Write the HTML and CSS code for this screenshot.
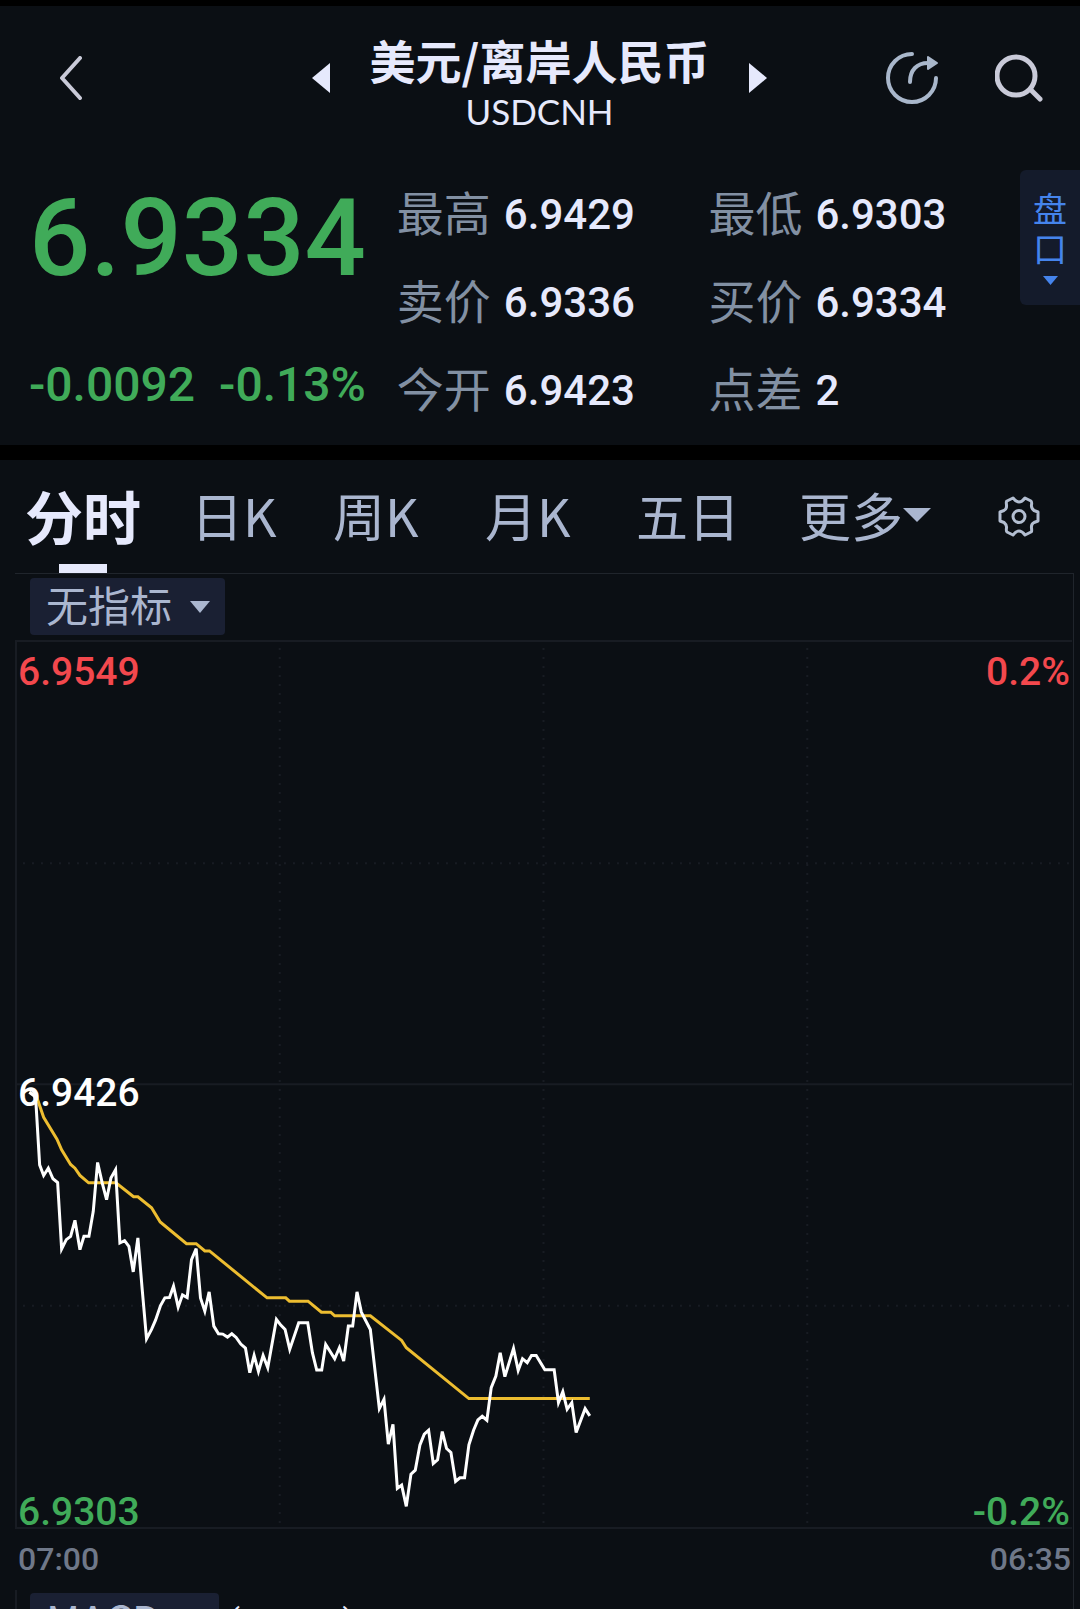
FILE: index.html
```html
<!DOCTYPE html>
<html lang="zh-CN">
<head>
<meta charset="utf-8">
<meta name="viewport" content="width=device-width, initial-scale=1">
<title>美元/离岸人民币 USDCNH</title>
<link rel="stylesheet" href="styles.css">
</head>
<body>
<div class="app">
  <header class="topbar">
    <button class="icon-btn" type="button" aria-label="返回">
      <svg width="22" height="44" viewBox="0 0 22 44"><path d="M20 2 2 22l18 20" fill="none" stroke="#c9cad8" stroke-width="4" stroke-linecap="round" stroke-linejoin="round"/></svg>
    </button>
    <div class="symbol">
      <button class="icon-btn" type="button" aria-label="上一个">
        <svg width="18" height="30" viewBox="0 0 18 30"><path d="M18 0v30L0 15z" fill="#e6e9fc"/></svg>
      </button>
      <div class="names">
        <h1 class="name">美元/离岸人民币</h1>
        <p class="code">USDCNH</p>
      </div>
      <button class="icon-btn" type="button" aria-label="下一个">
        <svg width="18" height="30" viewBox="0 0 18 30"><path d="M0 0v30l18-15z" fill="#e6e9fc"/></svg>
      </button>
    </div>
    <div class="actions">
      <button class="icon-btn" type="button" aria-label="分享">
        <svg width="54" height="54" viewBox="0 0 54 54"><g fill="none" stroke="#a9b7cb" stroke-width="4" stroke-linecap="round"><path d="M27 3A24 24 0 1 0 51 27"/><path d="M25 31c0-12 7-19 18-19"/></g><path d="M43 6 52 12 43 18z" fill="#a9b7cb" stroke="#a9b7cb" stroke-width="2" stroke-linejoin="round"/></svg>
      </button>
      <button class="icon-btn" type="button" aria-label="搜索">
        <svg width="48" height="48" viewBox="0 0 48 48"><g fill="none" stroke="#c9cad8" stroke-width="5" stroke-linecap="round"><circle cx="21" cy="22" r="19"/><path d="m36 36 9 9"/></g></svg>
      </button>
    </div>
  </header>

  <section class="quote">
    <div class="price">
      <strong class="last">6.9334</strong>
      <p class="change"><span>-0.0092</span><span>-0.13%</span></p>
    </div>
    <dl class="stats">
      <div class="stat"><dt>最高</dt><dd>6.9429</dd></div>
      <div class="stat"><dt>最低</dt><dd>6.9303</dd></div>
      <div class="stat"><dt>卖价</dt><dd>6.9336</dd></div>
      <div class="stat"><dt>买价</dt><dd>6.9334</dd></div>
      <div class="stat"><dt>今开</dt><dd>6.9423</dd></div>
      <div class="stat"><dt>点差</dt><dd>2</dd></div>
    </dl>
    <button class="depth" type="button">
      <span class="depth-label">盘口</span>
      <svg width="15" height="9" viewBox="0 0 15 9"><path d="M0 0h15L7.500 9z" fill="#4584ec"/></svg>
    </button>
  </section>

  <nav class="periods">
    <div class="tabs">
      <button class="tab active" type="button" aria-current="true">分时</button>
      <button class="tab" type="button">日K</button>
      <button class="tab" type="button">周K</button>
      <button class="tab" type="button">月K</button>
      <button class="tab" type="button">五日</button>
      <button class="tab" type="button" aria-haspopup="menu">更多<svg width="28" height="14" viewBox="0 0 28 14"><path d="M0 0h28L14 14z" fill="#aab6cf"/></svg></button>
    </div>
    <button class="icon-btn" type="button" aria-label="设置">
      <svg width="42" height="42" viewBox="0 0 42 42"><g fill="none" stroke="#b3bed1" stroke-width="3" stroke-linejoin="round" stroke-linecap="round"><path d="M15 2Q18 6 21 6T27 2L33 5Q34 6 33.500 9T36 14.500L40 16V25L36 26.500Q33 28 33.500 32T33 36L27 39Q24 35 21 35T15 39L9 36Q8 35 8.500 32T6 26.500L2 25V16L6 14.500Q9 13 8.500 9T9 5Z"/><circle cx="21" cy="20.500" r="6"/></g></svg>
    </button>
  </nav>

  <main class="charts">
    <div class="picker">
      <select class="chip" aria-label="主图指标"><option>无指标</option></select>
      <svg class="caret" width="20" height="12" viewBox="0 0 20 12"><path d="M0 0h20L10 12z" fill="#aab6cf"/></svg>
    </div>
    <div class="plot">
      <svg class="lines" viewBox="0 0 3168 2661" preserveAspectRatio="none" role="img" aria-label="分时走势">
        <g class="grid">
          <path d="M0 1330H3168"/>
          <path class="dots" d="M18 665H3168M18 1996H3168M789 18V2661M1581 18V2661M2373 18V2661"/>
        </g>
        <polyline class="average" points="37,1354 57,1362 80,1429 120,1495 134,1527 161,1571 174,1582 189,1604 215,1626 297,1626 350,1668 363,1668 404,1701 430,1744 509,1809 538,1809 564,1831 578,1831 751,1972 807,1972 818,1982 874,1982 914,2015 942,2015 954,2026 1061,2026 1155,2100 1169,2122 1357,2275 1720,2275"/>
        <polyline class="trace" points="37,1354 52,1365 57,1387 68,1572 80,1604 94,1582 108,1614 122,1625 134,1825 148,1797 161,1787 174,1739 189,1827 201,1787 216,1787 229,1712 242,1565 256,1627 269,1677 282,1612 296,1587 309,1807 323,1800 336,1817 349,1894 363,1792 376,1947 389,2095 404,2067 416,2039 431,1995 444,1972 458,1971 470,1937 484,2000 497,1963 511,1971 524,1857 538,1824 551,1972 564,2012 577,1954 591,2057 605,2080 618,2081 632,2090 645,2080 658,2091 672,2111 686,2123 699,2197 712,2145 725,2193 739,2145 753,2182 779,2037 792,2054 805,2067 819,2127 846,2047 873,2047 887,2137 900,2189 915,2189 927,2112 954,2155 968,2122 981,2162 995,2057 1008,2057 1021,1954 1034,2015 1061,2067 1088,2305 1102,2277 1115,2412 1129,2352 1142,2545 1155,2535 1169,2599 1183,2502 1196,2490 1210,2414 1223,2382 1236,2370 1250,2470 1263,2459 1277,2374 1290,2425 1303,2437 1317,2524 1330,2513 1344,2513 1357,2414 1371,2370 1384,2339 1397,2328 1411,2340 1424,2242 1438,2207 1451,2137 1465,2209 1491,2124 1505,2190 1518,2155 1532,2167 1545,2145 1559,2145 1585,2188 1613,2188 1626,2287 1639,2254 1652,2307 1666,2287 1679,2377 1706,2305 1720,2327"/>
      </svg>
      <span class="mark top-left up">6.9549</span>
      <span class="mark top-right up">0.2%</span>
      <span class="mark middle">6.9426</span>
      <span class="mark bottom-left down">6.9303</span>
      <span class="mark bottom-right down">-0.2%</span>
    </div>
    <div class="times"><time>07:00</time><time>06:35</time></div>
    <div class="sub">
      <div class="picker">
        <select class="chip" aria-label="副图指标"><option>MACD</option></select>
        <svg class="caret" width="20" height="12" viewBox="0 0 20 12"><path d="M0 0h20L10 12z" fill="#aab6cf"/></svg>
      </div>
      <span class="params">(12,26,9)</span>
    </div>
  </main>
</div>
</body>
</html>
```
FILE: styles.css
```css
* {
  box-sizing: border-box;
  margin: 0;
  padding: 0;
}

:root {
  --bg: #0b0f14;
  --text: #e6e9fc;
  --muted: #8290a3;
  --soft: #aab6cf;
  --chip: #1a2033;
  --grid: #181c23;
  --up: #f3484d;
  --down: #40ab59;
  --digits: Roboto, sans-serif;
}

body {
  background: var(--bg);
  color: var(--text);
  font-family: "Noto Sans CJK SC", sans-serif;
}

button,
select {
  border: 0;
  background: none;
  color: inherit;
  font: inherit;
}

svg {
  display: block;
  flex: none;
}

.app {
  height: 100vh;
  overflow: hidden;
  border-top: 6px solid #000;
}

.topbar {
  display: grid;
  grid-template-columns: 1fr auto 1fr;
  align-items: center;
  height: 144px;
  padding: 0 37px 0 60px;
}

.icon-btn {
  display: block;
}

.symbol {
  display: flex;
  align-items: center;
  gap: 40px;
  margin-left: -24px;
}

.names {
  padding-top: 14px;
  text-align: center;
}

.name {
  font-size: 46px;
  font-weight: 700;
  line-height: 52px;
}

.code {
  font: 35px/52px Lato, sans-serif;
}

.actions {
  display: flex;
  align-items: center;
  justify-content: flex-end;
  gap: 56px;
}

.quote {
  display: flex;
  padding: 20px 0 11px 29px;
}

.price {
  width: 35%;
  color: var(--down);
  font-family: var(--digits);
}

.last {
  display: block;
  font-size: 108px;
  font-weight: 500;
  line-height: 136px;
}

.change {
  display: flex;
  gap: 24px;
  margin-top: 30px;
  font-size: 48px;
  font-weight: 500;
  line-height: 98px;
}

.stats {
  display: grid;
  flex: 1;
  grid-template-columns: 1fr 1fr;
  grid-auto-rows: 88px;
}

.stat {
  display: flex;
  align-items: center;
  gap: 13px;
  font-size: 47px;
}

.stat dt {
  padding-bottom: 8px;
  color: var(--muted);
}

.stat dd {
  font: 500 42px var(--digits);
}

.depth {
  display: flex;
  flex-direction: column;
  align-items: center;
  align-self: flex-start;
  width: 60px;
  padding: 18px 0 20px;
  border-radius: 6px 0 0 6px;
  background: #141b2b;
  color: #4584ec;
  font-size: 34px;
  line-height: 40px;
}

.depth-label {
  width: 1em;
  word-break: break-all;
}

.depth svg {
  margin-top: 8px;
}

.periods {
  display: flex;
  align-items: center;
  justify-content: space-between;
  padding: 0 40px 0 25px;
  border-top: 15px solid #000;
}

.tabs {
  display: grid;
  flex: 0 1 906px;
  grid-template-columns: 166fr 142fr 152fr 151fr 163fr 132fr;
}

.tab {
  display: flex;
  position: relative;
  align-items: center;
  justify-self: start;
  height: 113px;
  padding-bottom: 4px;
  color: var(--soft);
  font-size: 52px;
  white-space: nowrap;
}

.tab.active {
  color: var(--text);
  font-size: 58px;
  font-weight: 700;
}

.tab.active::after {
  position: absolute;
  bottom: 0;
  left: calc(50% - 24px);
  width: 48px;
  height: 9px;
  background: var(--text);
  content: "";
}

.charts {
  margin: 0 6px 0 15px;
  border: solid #20252c;
  border-width: 1px 1px 0 0;
}

.picker {
  display: inline-grid;
  align-items: center;
  margin: 4px 0 5px 15px;
}

.chip {
  grid-area: 1 / 1;
  height: 57px;
  padding: 0 52px 5px 16px;
  border-radius: 4px;
  appearance: none;
  background: var(--chip);
  color: var(--soft);
  font-size: 42px;
  line-height: 52px;
}

.caret {
  grid-area: 1 / 1;
  justify-self: end;
  margin-right: 15px;
  pointer-events: none;
}

.plot {
  position: relative;
  margin-right: 1px;
  border: 2px solid var(--grid);
  border-right: 0;
}

.lines {
  width: 100%;
  height: 885px;
}

.lines * {
  fill: none;
  vector-effect: non-scaling-stroke;
}

.grid {
  stroke: var(--grid);
  stroke-width: 2px;
}

.dots {
  stroke-dasharray: 2 7;
}

.average {
  stroke: #edbd30;
  stroke-width: 3px;
}

.trace {
  stroke: #fff;
  stroke-width: 3px;
}

.mark {
  position: absolute;
  font: 500 39px/40px var(--digits);
}

.top-left {
  top: 10px;
  left: 1px;
}

.top-right {
  top: 10px;
  right: 2px;
}

.middle {
  top: 50%;
  left: 1px;
  margin-top: -12px;
  color: #fff;
}

.bottom-left {
  bottom: -5px;
  left: 1px;
}

.bottom-right {
  right: 2px;
  bottom: -5px;
}

.up {
  color: var(--up);
}

.down {
  color: var(--down);
}

.times {
  display: flex;
  justify-content: space-between;
  padding: 0 2px 0 3px;
  color: #6f7889;
  font: 500 32px/61px var(--digits);
}

.sub {
  display: flex;
  align-items: center;
  border-left: 2px solid var(--grid);
}

.sub .picker {
  margin: 3px 10px 0 13px;
}

.sub .chip {
  padding-right: 58px;
}

.params {
  font: 32px var(--digits);
}
```
